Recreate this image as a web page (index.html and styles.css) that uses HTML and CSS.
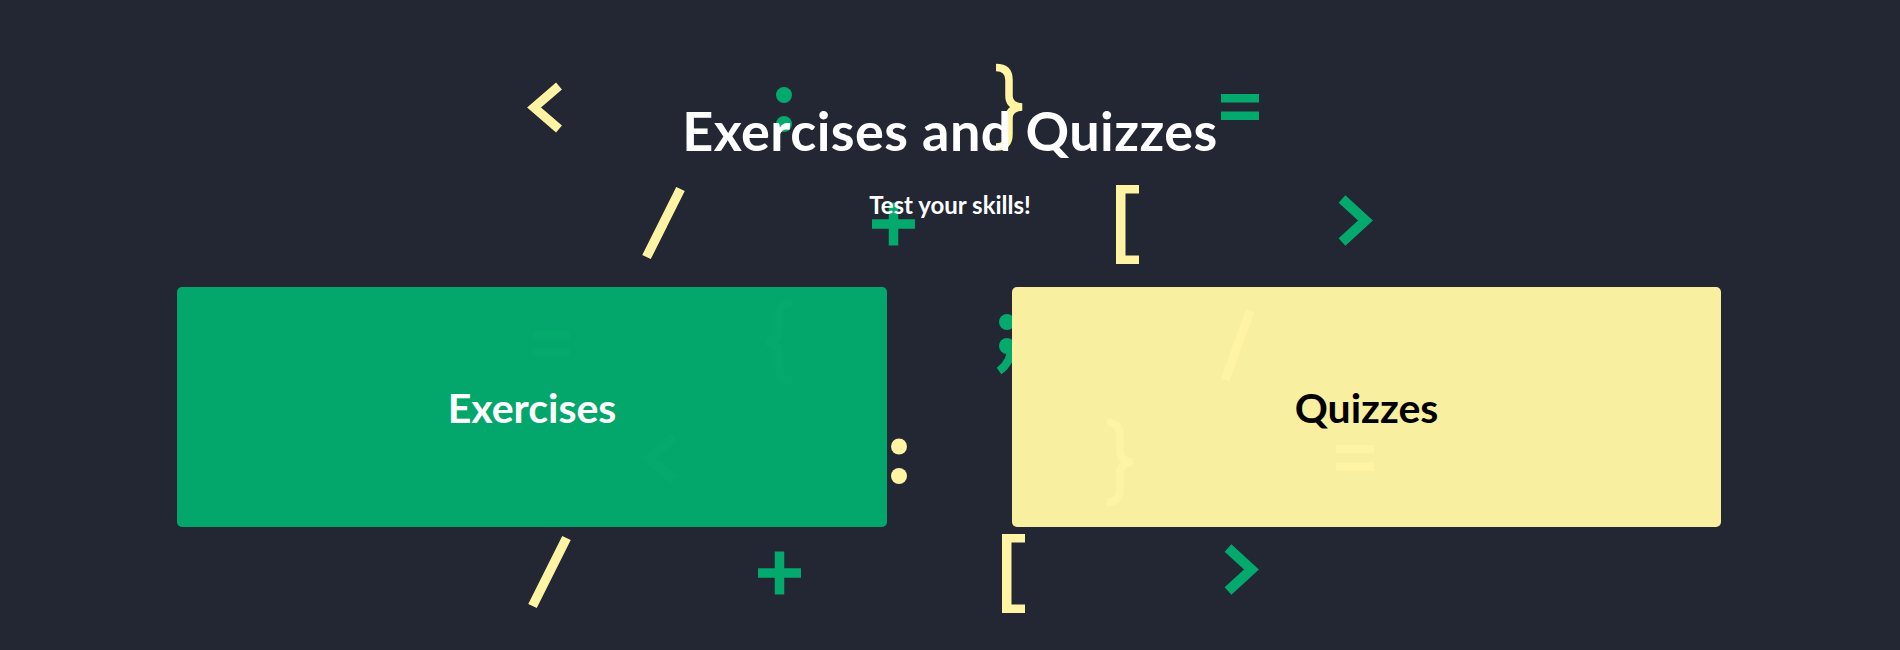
FILE: index.html
```html
<!DOCTYPE html>
<html lang="en">
<head>
<meta charset="utf-8">
<title>Exercises and Quizzes</title>
<link rel="stylesheet" href="styles.css">
</head>
<body>
<section class="hero">
  <svg class="pattern" width="1900" height="650" viewBox="0 0 1900 650" aria-hidden="true">
    <defs>
      <g id="row-a">
        <polyline class="y-stroke" points="559,86 534,107.5 559,129" stroke-width="9"/>
        <circle class="g-fill" cx="784" cy="95" r="8"/>
        <circle class="g-fill" cx="784" cy="124" r="8"/>
        <path class="y-stroke" stroke-width="7.5" d="M996,67.5 Q1009,67.5 1009,80 L1009,96 Q1009,106 1022,107 Q1009,108 1009,118 L1009,134 Q1009,147 996,147"/>
        <rect class="g-fill" x="1221" y="94" width="38" height="8.5"/>
        <rect class="g-fill" x="1221" y="111.5" width="38" height="8.5"/>
      </g>
      <g id="row-b">
        <line class="y-stroke" x1="680.5" y1="189" x2="646.5" y2="257" stroke-width="9.5"/>
        <rect class="g-fill" x="872" y="219.25" width="43" height="9.5"/>
        <rect class="g-fill" x="888.75" y="202.5" width="9.5" height="43"/>
        <rect class="y-fill" x="1116" y="185" width="9.5" height="79"/>
        <rect class="y-fill" x="1116" y="185" width="23" height="8.5"/>
        <rect class="y-fill" x="1116" y="255.5" width="23" height="8.5"/>
        <polyline class="g-stroke" points="1342,199 1365.5,220.5 1342,242" stroke-width="10"/>
      </g>
    </defs>
    <use href="#row-a"/>
    <use href="#row-b"/>
    <g>
      <rect class="g-fill" x="533" y="331" width="37" height="8.5"/>
      <rect class="g-fill" x="533" y="348" width="37" height="8.5"/>
      <path class="g-stroke" stroke-width="7.5" d="M792,303 Q779,303 779,316 L779,331 Q779,341 765,342 Q779,343 779,353 L779,368 Q779,381 792,381"/>
      <circle class="g-fill" cx="1007" cy="322" r="8"/>
      <circle class="g-fill" cx="1007" cy="346" r="8"/>
      <path class="g-stroke" stroke-width="8" d="M1011,346 Q1012,362 999,371"/>
      <line class="y-stroke" x1="1250" y1="311" x2="1225" y2="380" stroke-width="9"/>
    </g>
    <g transform="translate(115 351)">
      <polyline class="g-stroke" points="559,86 534,107.5 559,129" stroke-width="9"/>
      <circle class="y-fill" cx="784" cy="95.5" r="8"/>
      <circle class="y-fill" cx="784" cy="125" r="8"/>
      <path class="y-stroke" stroke-width="7.5" transform="translate(-4 4)" d="M996,67.5 Q1009,67.5 1009,80 L1009,96 Q1009,106 1022,107 Q1009,108 1009,118 L1009,134 Q1009,147 996,147"/>
      <rect class="y-fill" x="1221" y="94" width="38" height="8.5"/>
      <rect class="y-fill" x="1221" y="111.5" width="38" height="8.5"/>
    </g>
    <use href="#row-b" transform="translate(-114 349)"/>
  </svg>

  <div class="content">
    <h1 class="title">Exercises and Quizzes</h1>
    <p class="subtitle">Test your skills!</p>
    <div class="cards">
      <a class="card card-green" href="#">Exercises</a>
      <a class="card card-yellow" href="#">Quizzes</a>
    </div>
  </div>
</section>
</body>
</html>
```

FILE: styles.css
```css
html, body {
  margin: 0;
  padding: 0;
}

body {
  background: #232633;
  font-family: Lato, "Noto Sans", sans-serif;
  color: #ffffff;
}

.hero {
  position: relative;
  height: 650px;
  overflow: hidden;
}

.pattern {
  position: absolute;
  left: 0;
  top: 0;
  z-index: 0;
}

.y-stroke {
  fill: none;
  stroke: #fff4a3;
  stroke-linejoin: miter;
  stroke-linecap: butt;
}

.g-stroke {
  fill: none;
  stroke: #04aa6d;
  stroke-linejoin: miter;
  stroke-linecap: butt;
}

.y-fill {
  fill: #fff4a3;
}

.g-fill {
  fill: #04aa6d;
}

.content {
  position: relative;
  z-index: 1;
  display: flex;
  flex-direction: column;
  align-items: center;
  padding-top: 104px;
}

.title {
  margin: 0;
  font-size: 54px;
  line-height: 54px;
  font-weight: 700;
  letter-spacing: 0.45px;
}

.subtitle {
  margin: 35px 0 0;
  font-size: 24px;
  line-height: 24px;
  font-weight: 700;
}

.cards {
  display: flex;
  gap: 125px;
  margin-top: 70px;
  margin-right: 2px;
}

.card {
  width: 710px;
  height: 240px;
  border-radius: 5px;
  display: flex;
  align-items: center;
  justify-content: center;
  font-size: 41px;
  font-weight: 700;
  text-decoration: none;
}

.card-green {
  background: rgba(4, 170, 109, 0.975);
  color: #ffffff;
}

.card-yellow {
  width: 709px;
  background: rgba(255, 244, 163, 0.975);
  color: #000000;
}
```
